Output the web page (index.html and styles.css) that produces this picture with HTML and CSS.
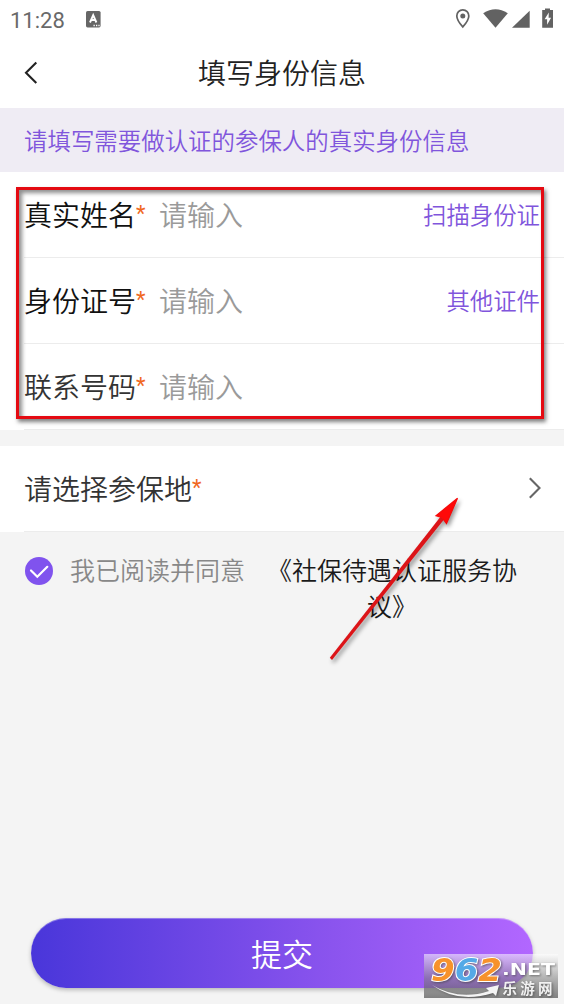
FILE: index.html
```html
<!DOCTYPE html>
<html lang="zh-CN">
<head>
<meta charset="utf-8">
<title>填写身份信息</title>
<link rel="stylesheet" href="styles.css">
</head>
<body>
<div class="screen">
  <div class="status">
    <span class="clock">11:28</span>
    <svg class="app-icon" width="15" height="17" viewBox="0 0 15 17"><rect width="14.6" height="16.4" rx="1.6" fill="#666"/><path d="M4 11.500 7.200 4.200 10.400 11.500M5.200 9h4" fill="none" stroke="#fff" stroke-width="1.900"/><path d="M7.500 14.500h1.300M10 14.500h1.300M12.400 14.500h1.200" stroke="#fff" stroke-width="1.300"/></svg>
    <svg class="status-icons" width="100" height="22" viewBox="0 0 100 22">
      <path d="M8.800 .9c3.500 0 6 2.700 6 6 0 4.200-6 11-6 11s-6-6.800-6-11c0-3.300 2.500-6 6-6z" fill="none" stroke="#626262" stroke-width="1.700"/>
      <circle cx="8.800" cy="6.900" r="2.500" fill="#626262"/>
      <path d="M29.200 4.200Q41.500 -3.800 53.800 4.200L41.500 18.800z" fill="#626262"/>
      <path d="M58 18.700 75.700 1.800V18.700z" fill="#626262"/>
      <path d="M88.200 1H91V-.5h5V1h3v17.800H88.200z" fill="#626262"/>
      <path d="M94.800 3.500 90.600 10.300h2.500v5.500l4-7h-2.500z" fill="#fff"/>
    </svg>
  </div>
  <header class="nav">
    <svg class="back" width="14" height="24" viewBox="0 0 14 24"><path d="M12.300 1.500 2 11.800 12.300 22.100" fill="none" stroke="#222" stroke-width="2.100"/></svg>
    <h1 class="title">填写身份信息</h1>
  </header>
  <div class="notice">请填写需要做认证的参保人的真实身份信息</div>
  <div class="form">
    <div class="row"><span class="label strong">真实姓名</span><span class="star">*</span><span class="hint">请输入</span><span class="action">扫描身份证</span></div>
    <div class="row"><span class="label strong">身份证号</span><span class="star">*</span><span class="hint">请输入</span><span class="action">其他证件</span></div>
    <div class="row"><span class="label">联系号码</span><span class="star">*</span><span class="hint">请输入</span></div>
  </div>
  <div class="form region">
    <div class="row"><span class="label">请选择参保地</span><span class="star">*</span>
      <svg class="chevron" width="14" height="22" viewBox="0 0 14 22"><path d="M1.800 1.300 11.500 11 1.800 20.700" fill="none" stroke="#666" stroke-width="2.100"/></svg>
    </div>
  </div>
  <div class="agree">
    <svg class="check" width="28" height="28" viewBox="0 0 28 28"><circle cx="14" cy="14" r="14" fill="#8053ee"/><path d="M6 13.500 12.300 19.700 22.300 9.800" fill="none" stroke="#fff" stroke-width="2.200" stroke-linecap="round"/></svg>
    <span class="consent">我已阅读并同意</span>
    <span class="terms">《社保待遇认证服务协<br>议》</span>
  </div>
  <div class="submit">提交</div>

  <div class="frame"></div>
  <svg class="arrow" width="150" height="180" viewBox="0 0 150 180"><path d="M9.800 167.800 120.500 26.800 124 29.500 12 170z" fill="#dc1418"/><path d="M137.500 8.300 116 25.700 122 27.500 126.500 33.500z" fill="#ff0909" stroke="#f50a0a" stroke-width="1.200"/></svg>
  <div class="watermark">
    <svg width="134" height="44" viewBox="0 0 134 44">
      <g font-family="DejaVu Sans, sans-serif" font-weight="bold">
        <text x="7" y="27" font-style="italic" font-size="32" textLength="71" lengthAdjust="spacingAndGlyphs" stroke="#fff" stroke-width="2" paint-order="stroke"><tspan fill="#f7922b">9</tspan><tspan fill="#55a9e6">6</tspan><tspan fill="#f7922b">2</tspan></text>
        <text x="78" y="21" font-size="16.500" textLength="53" lengthAdjust="spacingAndGlyphs" fill="#fff">.NET</text>
      </g>
      <path d="M8 31Q35 47 65 37L62 34 75 31 72 42 69 39Q34 50 8 31z" fill="#f4f4f4"/>
      <text x="78.500" y="39.500" font-family="Noto Sans CJK SC, sans-serif" font-weight="bold" font-size="14.500" textLength="50" fill="#f2f2f2">乐游网</text>
    </svg>
  </div>
</div>
</body>
</html>
```
FILE: styles.css
```css
* { box-sizing: border-box; }
body { margin: 0; background: #f4f4f4; font-family: "Noto Sans CJK SC", sans-serif; font-weight: 350; }
.screen { position: relative; width: 564px; height: 1004px; overflow: hidden; background: #f4f4f4; display: flex; flex-direction: column; }
.status { flex: none; height: 40px; background: #fff; display: flex; align-items: flex-start; padding: 9px 10px 0; }
.clock { width: 76px; font: 22px/23px Roboto, sans-serif; color: #696969; }
.app-icon { margin-top: 2px; }
.status-icons { margin-left: auto; overflow: visible; }
.nav { flex: none; height: 68px; background: #fff; display: grid; grid-template-columns: 50px 1fr 50px; align-items: center; }
.back { margin-left: 24px; margin-top: -2px; }
.title { margin: 0; padding-bottom: 4px; font-size: 28px; line-height: 40px; font-weight: 350; text-align: center; color: #222; }
.notice { flex: none; height: 64px; padding: 0 24px; background: #efecf4; color: #8055dc; font-size: 23.45px; line-height: 64px; white-space: nowrap; }
.form { flex: none; background: #fff; }
.region { margin-top: 16px; }
.row { height: 86px; margin-left: 24px; padding: 0 24px 2px 0; display: flex; align-items: center; border-bottom: 1px solid #ececec; line-height: 40px; }
.label { font-size: 28px; color: #333; }
.strong { color: #111; }
.star { font-family: Roboto, sans-serif; font-weight: 400; font-size: 22px; color: #f0691f; width: 11px; padding-top: 1px; }
.hint { margin-left: 12px; font-size: 28px; color: #9a9a9a; }
.action { margin-left: auto; font-size: 23.4px; color: #8055dc; }
.chevron { margin: 0 -2px 0 auto; }
.agree { display: flex; align-items: flex-start; padding: 20px 0 0 25px; line-height: 36px; font-size: 25px; }
.check { margin-top: 5px; }
.consent { margin: -1px 0 0 17px; width: 197px; color: #888; }
.terms { margin-top: -1px; width: 250px; text-align: center; color: #1a1a1a; white-space: nowrap; }
.submit { margin: auto 31px 16px; height: 70px; width: 502px; flex: none; border-radius: 35px; background: linear-gradient(90deg, #4936da, #8b54ee 60%, #b267ff); box-shadow: 0 2px 4px rgba(0,0,0,.25), inset 0 1px rgba(255,255,255,.3); color: #fff; font-size: 31px; line-height: 69px; text-align: center; }
.frame { position: absolute; left: 16px; top: 187px; width: 528px; height: 232px; border: 3px solid #e40a12; box-shadow: 2px 3px 4px rgba(0,0,0,.5), inset 3px 3px 4px rgba(0,0,0,.45); }
.arrow { position: absolute; left: 320px; top: 490px; filter: drop-shadow(2px 3px 2px rgba(0,0,0,.4)); }
.watermark { position: absolute; left: 424px; top: 954px; width: 134px; height: 44px; background: linear-gradient(rgba(255,255,255,.55), rgba(125,125,125,.55) 55%, rgba(90,90,90,.75)); }
.watermark svg { display: block; filter: drop-shadow(1px 1px 1px rgba(60,60,60,.6)); }
```
